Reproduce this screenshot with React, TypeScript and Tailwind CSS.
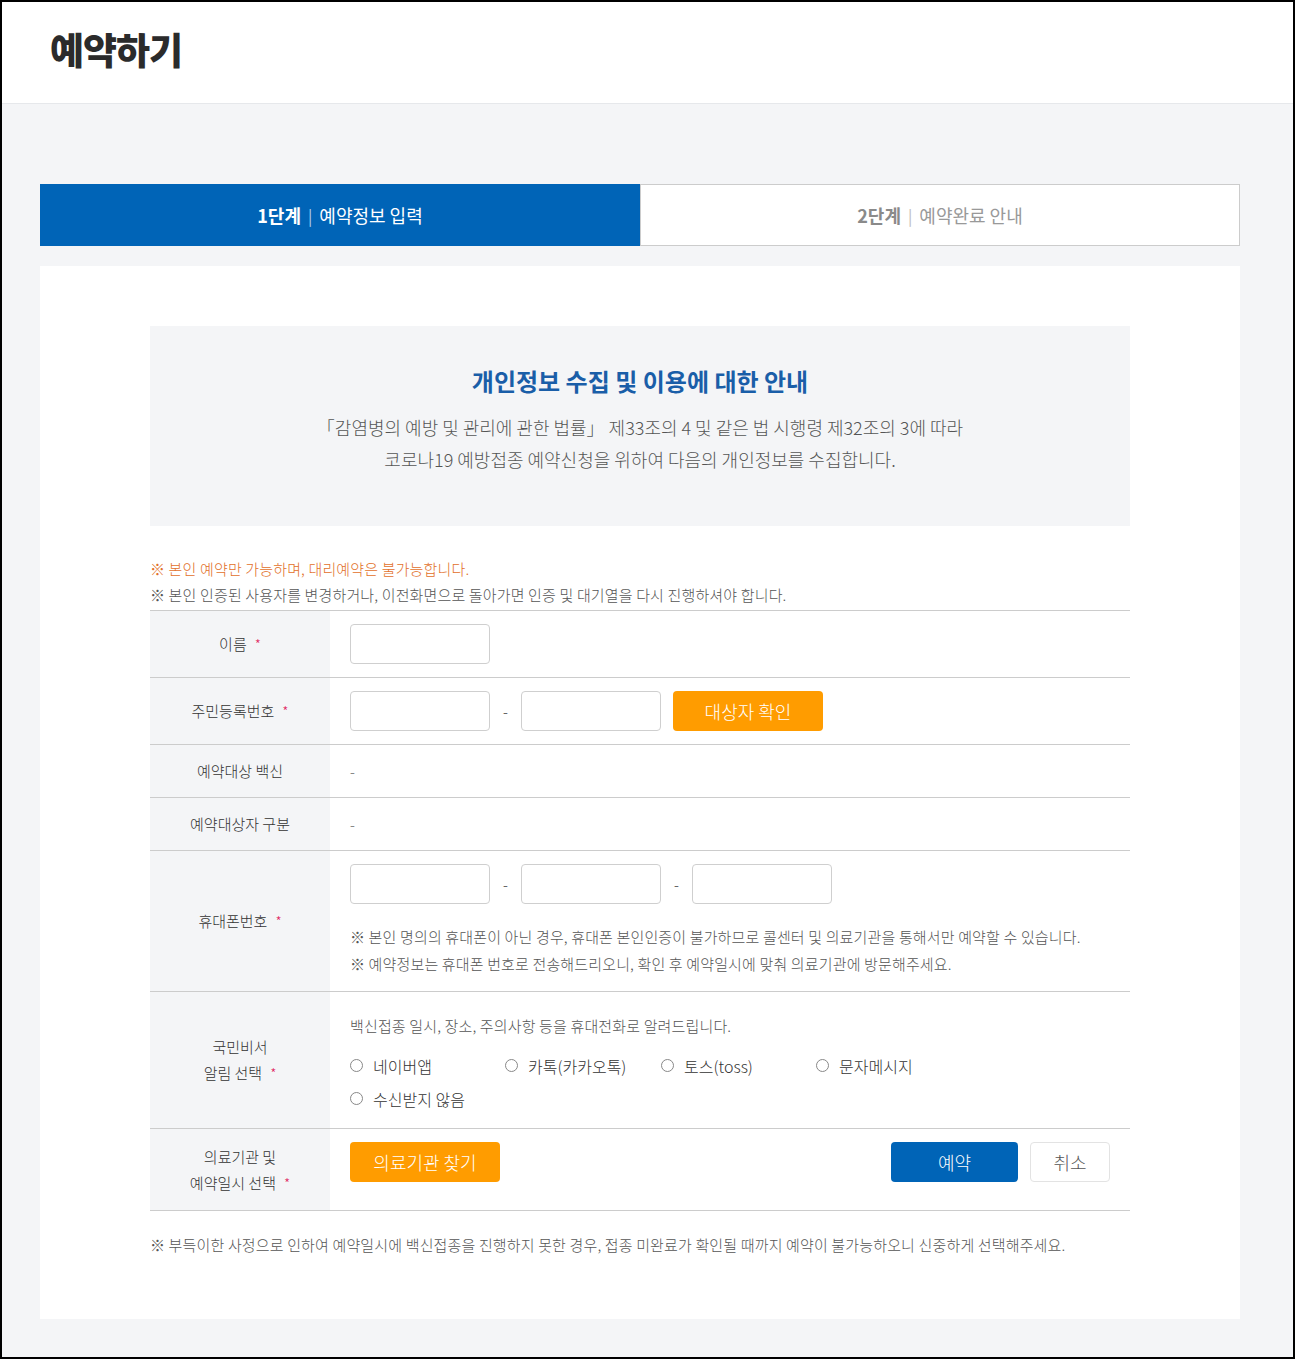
import React from 'react';

const font = { fontFamily: '"Noto Sans CJK KR", "Noto Sans", sans-serif' };

function Req() {
  return <span className="ml-2 text-[14px] text-[#e0245e]">*</span>;
}

function Input({ w = 'w-[140px]' }: { w?: string }) {
  return <input className={`${w} h-10 rounded-[4px] border border-[#cfcfcf] bg-white px-2 text-[15px] outline-none`} />;
}

function Dash() {
  return <span className="w-[31px] text-center text-[14px] text-[#666]">-</span>;
}

function Row({ label, children, h, className = '' }: { label: React.ReactNode; children: React.ReactNode; h: string; className?: string }) {
  return (
    <div className={`flex border-b border-[#cccccc] ${h}`}>
      <div className="flex w-[180px] shrink-0 items-center justify-center bg-[#f4f5f7] text-center text-[15px] font-light leading-[26px] text-[#333]">{label}</div>
      <div className={`flex-1 pl-5 ${className}`}>{children}</div>
    </div>
  );
}

function Radio({ label, w = 'w-[155px]' }: { label: string; w?: string }) {
  return (
    <label className={`flex items-center gap-[10px] ${w} text-[16px] font-light text-[#333]`}>
      <span className="h-[13px] w-[13px] rounded-full border border-[#888] bg-white" />
      {label}
    </label>
  );
}

const note = 'text-[15px] font-light tracking-[0.15px]';

export default function App() {
  return (
    <div style={font} className="min-h-[1359px] border-2 border-black bg-[#f4f5f7]">
      <header className="flex h-[102px] items-center border-b border-[#e6e8eb] bg-white pb-[6px] pl-[48px]">
        <h1 className="text-[37px] font-black tracking-[-1px] text-[#2b2b2b]">예약하기</h1>
      </header>

      <div className="ml-[38px] w-[1200px] pb-[38px] pt-[80px]">
        <div className="flex h-[62px]">
          <div className="flex w-1/2 items-center justify-center bg-[#0064b7] text-[18px] text-white">
            <b className="font-bold">1단계</b>
            <span className="mx-[7px] text-[16px] text-[#b7cfea]">|</span>
            <span>예약정보 입력</span>
          </div>
          <div className="flex w-1/2 items-center justify-center border border-[#cccccc] bg-white text-[18px] text-[#999]">
            <b className="font-bold text-[#8a8a8a]">2단계</b>
            <span className="mx-[7px] text-[16px] text-[#bbb]">|</span>
            <span>예약완료 안내</span>
          </div>
        </div>

        <div className="mt-[20px] bg-white pb-[62px] pl-[110px] pt-[60px]">
          <div className="w-[980px]">
            <div className="flex h-[200px] flex-col items-center bg-[#f4f5f7] pt-[38px] text-center">
              <h2 className="text-[24px] font-bold leading-[34px] text-[#1a5ea8]">개인정보 수집 및 이용에 대한 안내</h2>
              <p className="mt-[13px] text-[18px] font-light leading-[32px] text-[#555]">
                「감염병의 예방 및 관리에 관한 법률」 제33조의 4 및 같은 법 시행령 제32조의 3에 따라
                <br />
                코로나19 예방접종 예약신청을 위하여 다음의 개인정보를 수집합니다.
              </p>
            </div>

            <div className={`mt-[30px] leading-[26px] ${note}`}>
              <p className="text-[#e2702a]">※ 본인 예약만 가능하며, 대리예약은 불가능합니다.</p>
              <p className="text-[#555]">※ 본인 인증된 사용자를 변경하거나, 이전화면으로 돌아가면 인증 및 대기열을 다시 진행하셔야 합니다.</p>
            </div>

            <div className="mt-[2px] border-t border-[#cccccc]">
              <Row label={<span>이름<Req /></span>} h="h-[67px]" className="flex items-center">
                <Input />
              </Row>
              <Row label={<span>주민등록번호<Req /></span>} h="h-[67px]" className="flex items-center">
                <Input />
                <Dash />
                <Input />
                <button className="ml-3 h-10 w-[150px] rounded-[4px] bg-[#ff9c00] text-[18px] font-light text-white">대상자 확인</button>
              </Row>
              <Row label="예약대상 백신" h="h-[53px]" className="flex items-center text-[14px] text-[#888]">
                -
              </Row>
              <Row label="예약대상자 구분" h="h-[53px]" className="flex items-center text-[14px] text-[#888]">
                -
              </Row>
              <Row label={<span>휴대폰번호<Req /></span>} h="h-[141px]" className="pt-[13px]">
                <div className="flex items-center">
                  <Input />
                  <Dash />
                  <Input />
                  <Dash />
                  <Input />
                </div>
                <div className={`mt-[19px] leading-[27px] text-[#555] ${note}`}>
                  <p>※ 본인 명의의 휴대폰이 아닌 경우, 휴대폰 본인인증이 불가하므로 콜센터 및 의료기관을 통해서만 예약할 수 있습니다.</p>
                  <p>※ 예약정보는 휴대폰 번호로 전송해드리오니, 확인 후 예약일시에 맞춰 의료기관에 방문해주세요.</p>
                </div>
              </Row>
              <Row
                label={
                  <span>
                    국민비서
                    <br />
                    알림 선택
                    <Req />
                  </span>
                }
                h="h-[137px]"
                className="pt-[22px]"
              >
                <p className={`leading-[24px] text-[#555] ${note}`}>백신접종 일시, 장소, 주의사항 등을 휴대전화로 알려드립니다.</p>
                <div className="mt-[11px] flex h-[33px] items-center">
                  <Radio label="네이버앱" />
                  <Radio label="카톡(카카오톡)" w="w-[156px]" />
                  <Radio label="토스(toss)" />
                  <Radio label="문자메시지" />
                </div>
                <div className="flex h-[33px] items-center">
                  <Radio label="수신받지 않음" />
                </div>
              </Row>
              <Row
                label={
                  <span>
                    의료기관 및
                    <br />
                    예약일시 선택
                    <Req />
                  </span>
                }
                h="h-[82px]"
                className="flex items-start pr-5 pt-[13px]"
              >
                <button className="h-10 w-[150px] rounded-[4px] bg-[#ff9c00] text-[18px] font-light text-white">의료기관 찾기</button>
                <div className="ml-auto flex gap-3">
                  <button className="h-10 w-[127px] rounded-[4px] bg-[#0064b7] text-[18px] font-light text-white">예약</button>
                  <button className="h-10 w-[80px] rounded-[4px] border border-[#e3e3e3] bg-white text-[18px] font-light text-[#555]">취소</button>
                </div>
              </Row>
            </div>

            <p className={`mt-[22px] leading-[24px] text-[#555] ${note}`}>
              ※ 부득이한 사정으로 인하여 예약일시에 백신접종을 진행하지 못한 경우, 접종 미완료가 확인될 때까지 예약이 불가능하오니 신중하게 선택해주세요.
            </p>
          </div>
        </div>
      </div>
    </div>
  );
}
